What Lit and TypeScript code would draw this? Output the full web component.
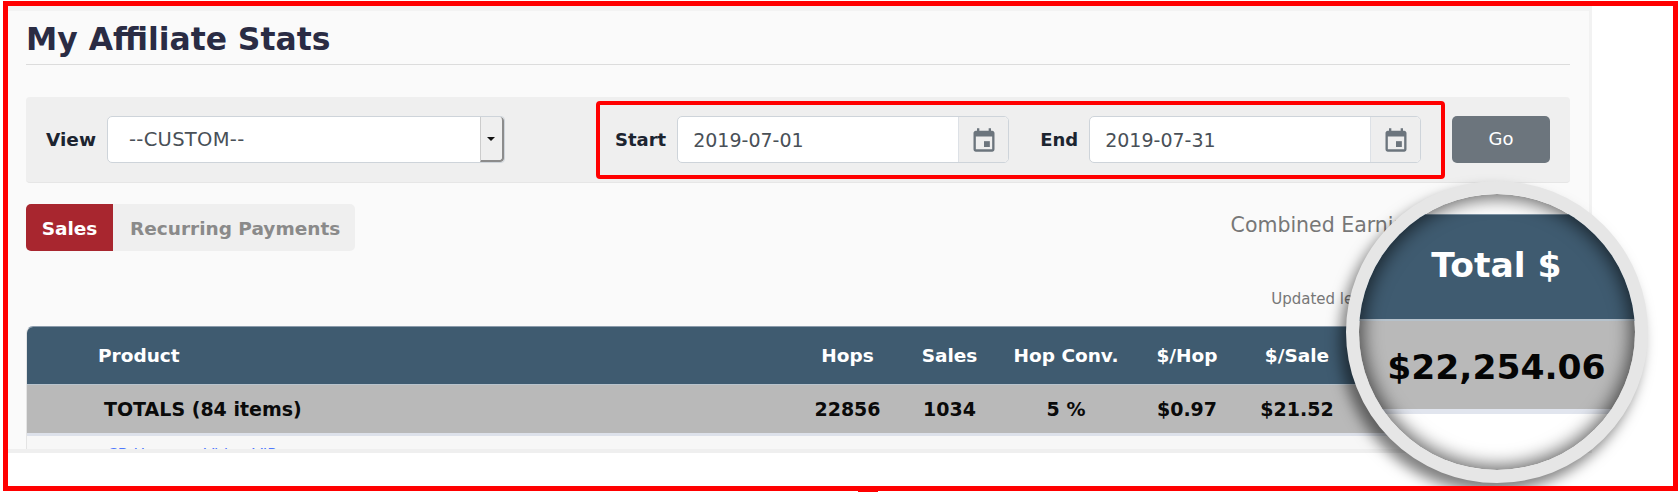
import { LitElement, html, css } from "lit";
import { customElement } from "lit/decorators.js";

const calendar = html`<svg class="cal" viewBox="0 0 24 24" width="28" height="28" aria-hidden="true">
  <path fill="#6c757d" d="M19 4h-1V2h-2v2H8V2H6v2H5C3.900 4 3 4.900 3 6v14c0 1.100.9 2 2 2h14c1.100 0 2-.9 2-2V6c0-1.100-.9-2-2-2zm0 16H5V9h14v11z"/>
  <rect x="12" y="13" width="5" height="5" fill="#6c757d"/>
</svg>`;

@customElement("app-root")
export class AppRoot extends LitElement {
  static styles = css`
    :host { display: block; position: relative; width: 1678px; height: 492px; background: #fff; overflow: hidden;
      font-family: "DejaVu Sans", Verdana, sans-serif; }
    * { box-sizing: border-box; }
    .frame { position: relative; height: 490px; margin: 1px 0 0 3px; border: 5.5px solid #f00; background: #fff; overflow: hidden; }
    .notch { position: absolute; left: 858px; top: 491px; width: 20px; height: 1px; background: #f00; }
    .panel { width: 1584px; height: 447px; background: #fafafa; border-top: 5px solid #f3f3f3; border-right: 3px solid #f2f2f2; border-bottom: 4px solid #efefef;
      padding: 0 19px 0 18px; overflow: hidden; }
    h1 { margin: 0; height: 54px; padding-top: 5px; border-bottom: 1px solid #dcdcdc; font-size: 31.400px; line-height: 47px; font-weight: 700; color: #2a2c44; }
    .bar { display: flex; align-items: center; height: 86px; margin-top: 32px; background: #efefef; border-radius: 4px; border-bottom: 1px solid #e6e6e6; padding-left: 20px; }
    label { font-size: 18px; font-weight: 700; color: #1c2430; }
    label.view { font-size: 18.500px; }
    .select { display: flex; align-items: stretch; width: 398px; height: 47px; margin-left: 11px; background: #fff; border: 1px solid #ced4da; border-radius: 5px 4px 4px 5px; overflow: hidden; }
    .select .val { flex: 1; padding-left: 21px; font-size: 19.500px; letter-spacing: .3px; line-height: 46px; color: #495057; }
    .drop { display: flex; align-items: center; justify-content: center; width: 24px; background: #efefef; border-left: 1px solid #ccc; border-right: 2px solid #8c8c8c; border-bottom: 2px solid #8c8c8c; border-radius: 0 4px 4px 0; }
    .drop i { width: 0; height: 0; border: 4px solid transparent; border-top: 4px solid #111; border-bottom: 0; }
    .group { display: flex; align-items: center; width: 849px; height: 78px; margin-left: 91px; border: 4px solid #f00; border-radius: 4px; padding-left: 15px; }
    .input { display: flex; width: 332px; height: 47px; margin-left: 11px; background: #fff; border: 1px solid #ced4da; border-radius: 5px; overflow: hidden; }
    .input .val { flex: 1; padding-left: 15px; font-size: 19px; line-height: 46px; color: #495057; }
    .addon { display: flex; align-items: center; justify-content: center; width: 50px; background: #eee; border-left: 1px solid #dde1e6; }
    .end { margin-left: 31px; }
    .input.e { width: 332px; }
    .go { width: 98px; height: 47px; margin-left: 7px; padding: 0 0 2px; border: 0; border-radius: 5px; background: #6c757d; color: #fff; font: 18px/45px "DejaVu Sans", Verdana, sans-serif; }
    .row { display: flex; justify-content: space-between; height: 122px; margin-top: 21px; }
    .tabs { display: flex; height: 47px; width: 329px; background: #efefef; border-radius: 5px; font-size: 18.500px; font-weight: 700; line-height: 49px; overflow: hidden; }
    .tab-on { width: 87px; background: #a8262f; color: #fff; text-align: center; }
    .tab { padding-left: 17px; color: #8a8a8a; }
    .meta { color: #777; text-align: right; padding-right: 9px; }
    .combined { font-size: 20.500px; line-height: 36px; margin-top: 3px; white-space: nowrap; }
    .updated { font-size: 15px; line-height: 20px; margin: 46px 58px 0 0; white-space: nowrap; }
    .table { border-top: 1px solid #8b9bab; border-radius: 7px 7px 0 0; overflow: hidden; background: #f7f7f7; height: 124px; border-left: 1px solid #e4e4e4; }
    .tr { display: grid; grid-template-columns: 1fr 101px 103px 130px 112px 108px 219px; align-items: center; font-weight: 700; }
    .th { height: 58px; background: #3f5b70; color: #fff; border-bottom: 1px solid #b9c4cd; font-size: 18.500px; }
    .total { height: 51px; background: #b9b9b9; color: #0a0a0a; border-bottom: 3px solid #dde1ea; font-size: 19px; }
    .tr span { text-align: center; white-space: nowrap; }
    .tr span.name { text-align: left; }
    .th .name { padding-left: 71px; }
    .total .name { padding-left: 77px; }
    .link { padding: 10px 0 0 80px; font-size: 15.500px; line-height: 18px; color: #4f79ff; }
    .lens { position: absolute; left: 1337.500px; top: 174.500px; width: 302px; height: 302px; border-radius: 50%; border: 13px solid #e6e6e6; background: #fff; overflow: hidden;
      box-shadow: -6px 9px 14px rgba(0,0,0,.5); display: flex; flex-direction: column; }
    .lens .shade { position: absolute; inset: 0; border-radius: 50%; box-shadow: inset 0 0 18px 4px rgba(0,0,0,.6); pointer-events: none; }
    .lens .gap { height: 20px; flex: none; }
    .lens .head { height: 107px; flex: none; background: #3f5b70; border-top: 1px solid #7f95a6; border-bottom: 2px solid #b6c2cc; color: #fff; font-size: 34.500px; font-weight: 700; text-align: center; line-height: 100px; }
    .lens .cell { height: 93px; flex: none; background: #b9b9b9; border-bottom: 5px solid #e1e5ee; color: #050505; font-size: 34.500px; font-weight: 700; text-align: center; line-height: 92px; }
  `;

  render() {
    return html`<div class="frame">
      <div class="panel">
        <h1>My Affiliate Stats</h1>
        <div class="bar">
          <label class="view">View</label>
          <div class="select"><div class="val">--CUSTOM--</div><div class="drop"><i></i></div></div>
          <div class="group">
            <label>Start</label>
            <div class="input"><div class="val">2019-07-01</div><div class="addon">${calendar}</div></div>
            <label class="end">End</label>
            <div class="input e"><div class="val">2019-07-31</div><div class="addon">${calendar}</div></div>
          </div>
          <button class="go">Go</button>
        </div>
        <div class="row">
          <div class="tabs"><div class="tab-on">Sales</div><div class="tab">Recurring Payments</div></div>
          <div class="meta">
            <div class="combined">Combined Earnings: $22,254.06</div>
            <div class="updated">Updated less than an hour ago</div>
          </div>
        </div>
        <div class="table">
          <div class="tr th"><span class="name">Product</span><span>Hops</span><span>Sales</span><span>Hop Conv.</span><span>$/Hop</span><span>$/Sale</span><span></span></div>
          <div class="tr total"><span class="name">TOTALS (84 items)</span><span>22856</span><span>1034</span><span>5 %</span><span>$0.97</span><span>$21.52</span><span></span></div>
          <div class="link">CB Home ... Video VIP</div>
        </div>
      </div>
      <div class="lens">
        <div class="gap"></div>
        <div class="head">Total $</div>
        <div class="cell">$22,254.06</div>
        <div class="shade"></div>
      </div>
    </div>
    <div class="notch"></div>`;
  }
}
